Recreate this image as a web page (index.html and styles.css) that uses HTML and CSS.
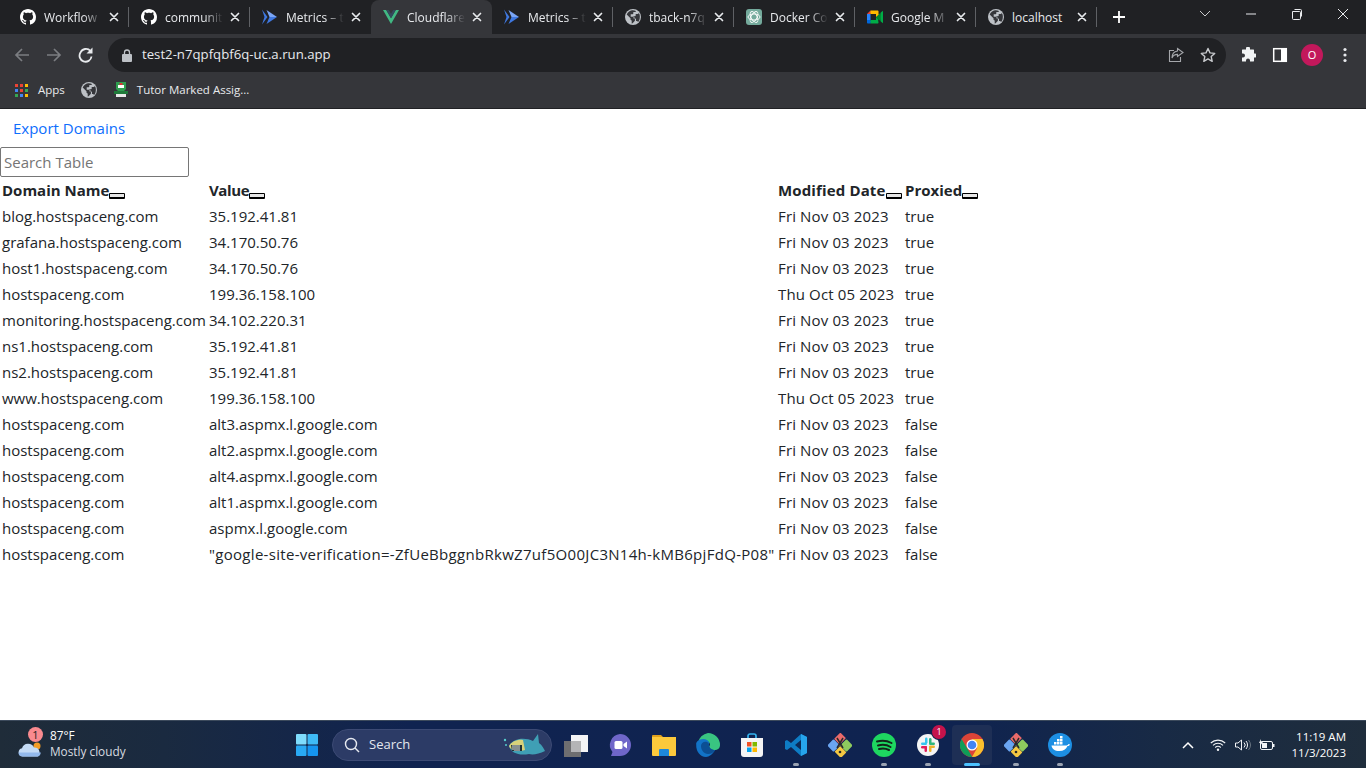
FILE: index.html
```html
<!DOCTYPE html>
<html lang="en">
<head>
<meta charset="utf-8">
<title>Cloudflare Domains</title>
<link rel="stylesheet" href="styles.css">
</head>
<body>
<svg class="defs" width="0" height="0" aria-hidden="true">
  <symbol id="gh" viewBox="0 0 16 16"><path fill="#fff" d="M8 0C3.58 0 0 3.58 0 8c0 3.54 2.29 6.53 5.47 7.59.4.07.55-.17.55-.38 0-.19-.01-.82-.01-1.49-2.01.37-2.53-.49-2.69-.94-.09-.23-.48-.94-.82-1.13-.28-.15-.68-.52-.01-.53.63-.01 1.08.58 1.23.82.72 1.21 1.87.87 2.33.66.07-.52.28-.87.51-1.07-1.78-.2-3.64-.89-3.64-3.95 0-.87.31-1.59.82-2.15-.08-.2-.36-1.02.08-2.12 0 0 .67-.21 2.2.82.64-.18 1.32-.27 2-.27.68 0 1.36.09 2 .27 1.53-1.04 2.2-.82 2.2-.82.44 1.1.16 1.92.08 2.12.51.56.82 1.27.82 2.15 0 3.07-1.87 3.75-3.65 3.95.29.25.54.73.54 1.48 0 1.07-.01 1.93-.01 2.2 0 .21.15.46.55.38A8.013 8.013 0 0016 8c0-4.42-3.58-8-8-8z"/></symbol>
  <symbol id="run" viewBox="0 0 16 16"><path fill="#3f78e0" d="M0 .5L5.500 8 0 15.500 2.500 8z"/><path fill="#7aa5f5" d="M4.500 1L15 8H7.500z"/><path fill="#3f78e0" d="M15 8L4.500 15l3-7z"/></symbol>
  <symbol id="globe" viewBox="0 0 16 16"><circle cx="8" cy="8" r="8" fill="#bdc1c6"/><path fill="#35363a" d="M7 1.200C4.600 1.600 2.600 3.200 1.700 5.500L5.500 9.200v1.100c0 .7.500 1.200 1.200 1.200v3l.9-.2 2.300-2.600V9.500c0-1.100-.9-1.800-1.900-1.800H5.700V5.300h1.500c.7 0 1.100-.5 1.100-1.100V3.100h1.500c.7 0 1.100-.5 1.100-1.100C9.800 1.300 8.300 1 7 1.200zM14.800 8.400c0 1.800-.7 3.400-1.800 4.600-.2-.5-.7-.9-1.300-.9H11v-2c0-.4-.3-.7-.7-.7H8.500V7.200H10c.4 0 .7-.3.7-.7V5.100H12c1 0 1.800-.8 1.800-1.200 1 1.300 1.200 2.900 1 4.500z"/></symbol>
  <symbol id="x" viewBox="0 0 10 10"><path stroke="#e8eaed" stroke-width="1.700" stroke-linecap="round" d="M1.500 1.500l7 7m0-7l-7 7" fill="none"/></symbol>
  <symbol id="kraken" viewBox="0 0 24 24"><rect x="1" y="8" width="9" height="9" rx="1" transform="rotate(45 5.500 12.500)" fill="#6aa5f2"/><rect x="14" y="8" width="9" height="9" rx="1" transform="rotate(45 18.500 12.500)" fill="#8ecb5e"/><rect x="8" y="15" width="9" height="8" rx="1" transform="rotate(45 12.500 19)" fill="#f5c842"/><rect x="8" y="1" width="8" height="9" rx="1" transform="rotate(45 12 5.500)" fill="#e96a6a"/><path d="M9 5l6 10m0-10L9 15" stroke="#2a2a2a" stroke-width="1.500"/><circle cx="12" cy="19" r="1.300" fill="#2a2a2a"/></symbol>
</svg>

<header class="chrome">
  <div class="tabstrip">
    <div class="tab tab-sep"><svg class="fav"><use href="#gh"/></svg><span class="tab-title">Workflow</span><svg class="tab-x"><use href="#x"/></svg></div>
    <div class="tab tab-sep"><svg class="fav"><use href="#gh"/></svg><span class="tab-title">communit</span><svg class="tab-x"><use href="#x"/></svg></div>
    <div class="tab"><svg class="fav"><use href="#run"/></svg><span class="tab-title">Metrics – t</span><svg class="tab-x"><use href="#x"/></svg></div>
    <div class="tab tab-active"><svg class="fav" viewBox="0 0 16 16"><path fill="#41b883" d="M0 1h3.200L8 9.300 12.800 1H16L8 15z"/><path fill="#35495e" d="M3.200 1h2.600L8 4.800 10.200 1h2.600L8 9.300z"/></svg><span class="tab-title">Cloudflare</span><svg class="tab-x"><use href="#x"/></svg></div>
    <div class="tab tab-sep"><svg class="fav"><use href="#run"/></svg><span class="tab-title">Metrics – t</span><svg class="tab-x"><use href="#x"/></svg></div>
    <div class="tab tab-sep"><svg class="fav"><use href="#globe"/></svg><span class="tab-title">tback-n7q</span><svg class="tab-x"><use href="#x"/></svg></div>
    <div class="tab tab-sep"><svg class="fav" viewBox="0 0 16 16"><rect width="16" height="16" rx="3" fill="#74aa9c"/><g fill="none" stroke="#fff" stroke-width=".9"><ellipse cx="8" cy="8" rx="6" ry="3"/><ellipse cx="8" cy="8" rx="6" ry="3" transform="rotate(60 8 8)"/><ellipse cx="8" cy="8" rx="6" ry="3" transform="rotate(120 8 8)"/></g></svg><span class="tab-title">Docker Co</span><svg class="tab-x"><use href="#x"/></svg></div>
    <div class="tab tab-sep"><svg class="fav" viewBox="0 0 16 16"><path fill="#00832d" d="M9 8l2 2.300 2.700 1.700.5-4-.5-4-2.800 1.500z"/><path fill="#0066da" d="M0 11v2.500c0 .6.500 1 1 1h2.500l.5-1.900-.5-1.600-1.800-.5z"/><path fill="#e94235" d="M3.500 1.500L0 5l1.800.5L3.500 5l.5-1.700z"/><path fill="#2684fc" d="M3.500 5H0v6h3.500z"/><path fill="#00ac47" d="M11 10.300L9 8v3H3.500v3.500h7c.6 0 1-.4 1-1z"/><path fill="#ffba00" d="M10.500 1.500h-7V5H9v3l2.500-2.300V2.500c0-.6-.4-1-1-1z"/><path fill="#00ac47" d="M13.700 3.500l2.300-1.700v12.400l-2.300-1.700z"/></svg><span class="tab-title">Google M</span><svg class="tab-x"><use href="#x"/></svg></div>
    <div class="tab tab-sep"><svg class="fav"><use href="#globe"/></svg><span class="tab-title tab-plain">localhost</span><svg class="tab-x"><use href="#x"/></svg></div>
    <svg class="newtab" viewBox="0 0 12 12"><path d="M6 0v12M0 6h12" stroke="#fff" stroke-width="1.800"/></svg>
    <div class="winctl">
      <svg class="wc" viewBox="0 0 46 28"><path d="M18 11l5 5 5-5" fill="none" stroke="#c9cacc"/></svg>
      <svg class="wc" viewBox="0 0 46 28"><path d="M18 14h10" stroke="#e8eaed" stroke-width="1"/></svg>
      <svg class="wc" viewBox="0 0 46 28"><path d="M18.500 11.500h7a1 1 0 011 1v6a1 1 0 01-1 1h-6a1 1 0 01-1-1zM20.500 9.500h6a1 1 0 011 1v6" fill="none" stroke="#e8eaed"/></svg>
      <svg class="wc" viewBox="0 0 46 28"><path d="M18 9l10 10m0-10L18 19" stroke="#e8eaed" stroke-width="1"/></svg>
    </div>
  </div>
  <div class="toolbar">
    <svg class="tb-ico" viewBox="0 0 16 16"><path d="M15 8H2M8 2L2 8l6 6" fill="none" stroke="#7b7d81" stroke-width="1.700"/></svg>
    <svg class="tb-ico" viewBox="0 0 16 16"><path d="M1 8h13M8 2l6 6-6 6" fill="none" stroke="#7b7d81" stroke-width="1.700"/></svg>
    <svg class="tb-ico" viewBox="0 0 16 16"><path d="M13.500 9.500A6 6 0 112.500 5.500 6 6 0 0112.500 4" fill="none" stroke="#e8eaed" stroke-width="1.800"/><path d="M14.500.5v6h-6z" fill="#e8eaed"/></svg>
    <div class="omnibox">
      <svg class="lock" viewBox="0 0 10 13"><path d="M2.500 5V3.500a2.500 2.500 0 015 0V5" fill="none" stroke="#bdc1c6" stroke-width="1.300"/><rect y="5" width="10" height="8" rx="1" fill="#bdc1c6"/></svg>
      <span class="url">test2-n7qpfqbf6q-uc.a.run.app</span>
      <svg class="omni-ico share" viewBox="0 0 16 16"><path d="M6 3.500H1.500v11h11V10" fill="none" stroke="#a5a7ab" stroke-width="1.100"/><path d="M9.500 1.500l5.500 4-5.500 4V7.400C7 7.400 5 8.500 4 11c0-4 2-6.500 5.500-7z" fill="none" stroke="#a5a7ab" stroke-width="1.100"/></svg>
      <svg class="omni-ico" viewBox="0 0 16 16"><path d="M8 1.500l2 4.400 4.700.5-3.500 3.200 1 4.700L8 11.900l-4.200 2.400 1-4.700L1.300 6.400 6 5.900z" fill="none" stroke="#c8cacd" stroke-width="1.400" stroke-linejoin="round"/></svg>
    </div>
    <svg class="tb-ico" viewBox="0 0 16 16"><path fill="#f1f3f4" d="M6 2a2 2 0 014 0v1h3.500c.4 0 .5.200.5.500V7h1a2 2 0 010 4h-1v3.500c0 .3-.2.500-.5.500H10v-1a2 2 0 00-4 0v1H2.500a.5.500 0 01-.5-.5V11h1a2 2 0 000-4H2V3.500c0-.3.200-.5.500-.5H6z" transform="translate(0 -.5)"/></svg>
    <svg class="tb-ico tb-panel" viewBox="0 0 16 16"><rect x="1.700" y="1.700" width="12.600" height="12.600" fill="none" stroke="#fff" stroke-width="1.500"/><rect x="9" y="2" width="5" height="12" fill="#fff"/></svg>
    <span class="avatar">O</span>
    <svg class="tb-ico tb-last" viewBox="0 0 16 16"><g fill="#e8eaed"><circle cx="8" cy="2.500" r="1.600"/><circle cx="8" cy="8" r="1.600"/><circle cx="8" cy="13.500" r="1.600"/></g></svg>
  </div>
  <div class="bookmarks">
    <svg class="apps" viewBox="0 0 13 13"><g><rect width="3" height="3" fill="#ea4335"/><rect x="5" width="3" height="3" fill="#ea4335"/><rect x="10" width="3" height="3" fill="#fbbc04"/><rect y="5" width="3" height="3" fill="#4285f4"/><rect x="5" y="5" width="3" height="3" fill="#ea4335"/><rect x="10" y="5" width="3" height="3" fill="#34a853"/><rect y="10" width="3" height="3" fill="#34a853"/><rect x="5" y="10" width="3" height="3" fill="#4285f4"/><rect x="10" y="10" width="3" height="3" fill="#fbbc04"/></g></svg>
    <span class="bm-text">Apps</span>
    <svg class="bm-globe"><use href="#globe"/></svg>
    <svg class="bm-tutor" viewBox="0 0 16 16"><path fill="#2e9e4f" d="M3 0h10v7l-2 2H5L3 7z"/><path fill="#fff" d="M5 3h6v3H5z"/><path fill="#d33" d="M6.500 1h3v2h-3z"/><path fill="#1f7a3a" d="M1 9h14v3H1z"/><path fill="#e8e8e8" d="M3 12h10v3H3z"/></svg>
    <span class="bm-text">Tutor Marked Assig...</span>
  </div>
</header>

<main class="page">
  <a class="export" href="#">Export Domains</a>
  <input class="search" type="text" placeholder="Search Table">
  <table class="domains">
    <colgroup><col class="c1"><col class="c2"><col class="c3"><col class="c4"></colgroup>
    <thead>
      <tr><th>Domain Name<button class="sort"></button></th><th><span class="h-value">Value</span><button class="sort"></button></th><th><span class="date">Modified Date</span><button class="sort"></button></th><th>Proxied<button class="sort"></button></th></tr>
    </thead>
    <tbody>
      <tr><td>blog.hostspaceng.com</td><td>35.192.41.81</td><td class="date">Fri Nov 03 2023</td><td>true</td></tr>
      <tr><td>grafana.hostspaceng.com</td><td>34.170.50.76</td><td class="date">Fri Nov 03 2023</td><td>true</td></tr>
      <tr><td>host1.hostspaceng.com</td><td>34.170.50.76</td><td class="date">Fri Nov 03 2023</td><td>true</td></tr>
      <tr><td>hostspaceng.com</td><td>199.36.158.100</td><td class="date">Thu Oct 05 2023</td><td>true</td></tr>
      <tr><td>monitoring.hostspaceng.com</td><td>34.102.220.31</td><td class="date">Fri Nov 03 2023</td><td>true</td></tr>
      <tr><td>ns1.hostspaceng.com</td><td>35.192.41.81</td><td class="date">Fri Nov 03 2023</td><td>true</td></tr>
      <tr><td>ns2.hostspaceng.com</td><td>35.192.41.81</td><td class="date">Fri Nov 03 2023</td><td>true</td></tr>
      <tr><td>www.hostspaceng.com</td><td>199.36.158.100</td><td class="date">Thu Oct 05 2023</td><td>true</td></tr>
      <tr><td>hostspaceng.com</td><td>alt3.aspmx.l.google.com</td><td class="date">Fri Nov 03 2023</td><td>false</td></tr>
      <tr><td>hostspaceng.com</td><td>alt2.aspmx.l.google.com</td><td class="date">Fri Nov 03 2023</td><td>false</td></tr>
      <tr><td>hostspaceng.com</td><td>alt4.aspmx.l.google.com</td><td class="date">Fri Nov 03 2023</td><td>false</td></tr>
      <tr><td>hostspaceng.com</td><td>alt1.aspmx.l.google.com</td><td class="date">Fri Nov 03 2023</td><td>false</td></tr>
      <tr><td>hostspaceng.com</td><td>aspmx.l.google.com</td><td class="date">Fri Nov 03 2023</td><td>false</td></tr>
      <tr><td>hostspaceng.com</td><td class="val-long">"google-site-verification=-ZfUeBbggnbRkwZ7uf5O00JC3N14h-kMB6pjFdQ-P08"</td><td class="date">Fri Nov 03 2023</td><td>false</td></tr>
    </tbody>
  </table>
</main>

<footer class="taskbar">
  <div class="widget">
    <span class="weather-ico">
      <svg viewBox="0 0 24 15" width="24" height="15"><circle cx="19" cy="4" r="3.500" fill="#f39c25"/><path d="M4.500 14.500a4.200 4.200 0 01-.5-8.300 6.500 6.500 0 0112-.7 4.800 4.800 0 015.500 4.500 4.500 4.500 0 01-1.500 4.500z" fill="#c4dbf6"/><path d="M.5 10.500h22.300c-.3 2.500-1.500 4-3.800 4H4.500c-2.500 0-4-1.500-4-4z" fill="#93b9ec"/></svg>
      <span class="w-badge">1</span>
    </span>
    <span class="w-text"><span class="w-temp">87°F</span><span class="w-desc">Mostly cloudy</span></span>
  </div>
  <div class="task-center">
    <span class="tile">
      <svg viewBox="0 0 22 22" width="22" height="22"><rect width="10.500" height="10.500" rx="1" fill="#7fdcfc"/><rect x="11.500" width="10.500" height="10.500" rx="1" fill="#3fbaf5"/><rect y="11.500" width="10.500" height="10.500" rx="1" fill="#29a9f3"/><rect x="11.500" y="11.500" width="10.500" height="10.500" rx="1" fill="#1594ef"/></svg>
    </span>
    <div class="searchbox">
      <svg viewBox="0 0 16 16" width="16" height="16"><circle cx="7" cy="7" r="5.500" fill="none" stroke="#e6e9f0" stroke-width="1.400"/><path d="M11 11l4 4" stroke="#e6e9f0" stroke-width="1.500"/></svg>
      <span class="search-label">Search</span>
      <svg class="fish" viewBox="0 0 44 28" width="44" height="28"><path d="M6 15C10 7 22 6 30 10l5-7 1 9c3 2 5 6 6 8-6 3-12 4-16 3C16 25 8 22 6 15z" fill="#3f9fb5"/><path d="M6 15c3-5 9-7 14-6l2 10c-6 2-14 1-16-4z" fill="#d9d27a"/><path d="M8 14h11v6H9z" fill="#233"/><path d="M10 14v5m2-5v6m2-6v6m2-6v6" stroke="#eee" stroke-width="1"/><circle cx="2" cy="9" r="1.200" fill="#5cc"/><circle cx="3" cy="14" r="1" fill="#5cc"/></svg>
    </div>
    <span class="tile">
      <svg viewBox="0 0 24 24" width="24" height="24"><rect x="7" y="2" width="17" height="17" fill="#f4f4f6"/><rect x="0" y="8" width="17" height="16" fill="#6e6e70"/><rect x="7" y="8" width="10" height="11" fill="#b4b4b6"/></svg>
    </span>
    <span class="tile">
      <svg viewBox="0 0 24 24" width="24" height="24"><path d="M12 1a11 11 0 110 22H3l1.500-4A11 11 0 0112 1z" fill="#6f66c9"/><rect x="6.500" y="8" width="8" height="8" rx="1.500" fill="#fff"/><path d="M15.500 11l3.500-2.500v7L15.500 13z" fill="#fff"/></svg>
    </span>
    <span class="tile">
      <svg viewBox="0 0 24 22" width="24" height="22"><path d="M0 2a1 1 0 011-1h8l2 2h-11z" fill="#e0a01c"/><path d="M0 3h24v18a1 1 0 01-1 1H1a1 1 0 01-1-1z" fill="#fcc93c"/><path d="M7 16a1 1 0 011-1h8a1 1 0 011 1v6H7z" fill="#1e88d8"/></svg>
    </span>
    <span class="tile">
      <svg viewBox="0 0 24 24" width="24" height="24"><path d="M12 0a12 12 0 0112 12c0 3-2 5-6 5-3 0-5-1-5-3 0-1 1-1 1-3-1-4-8-5-12-1A12 12 0 0112 0z" fill="#39c481"/><path d="M.2 10C2 6 8 5 11 7c3 2 2 4 2 5 0 3 3 5 6 5-2 4-6 7-9 7C4 24 0 18 .2 12z" fill="#1273c7"/><path d="M5 13c0-3 3-5 6-4 2 1 2 2 2 3 0 3 3 5 6 5-2 3-4 4-7 4-4 0-7-4-7-8z" fill="#0c4f94"/></svg>
    </span>
    <span class="tile">
      <svg viewBox="0 0 22 24" width="22" height="24"><path d="M7 5V3a2 2 0 012-2h4a2 2 0 012 2v2" fill="none" stroke="#35b3ee" stroke-width="1.700"/><path d="M0 5h22v16a3 3 0 01-3 3H3a3 3 0 01-3-3z" fill="#f4f4f4"/><rect x="6" y="9" width="4.500" height="4.500" fill="#f25022"/><rect x="11.500" y="9" width="4.500" height="4.500" fill="#7fba00"/><rect x="6" y="14.500" width="4.500" height="4.500" fill="#00a4ef"/><rect x="11.500" y="14.500" width="4.500" height="4.500" fill="#ffb900"/></svg>
    </span>
    <span class="tile on">
      <svg viewBox="0 0 24 24" width="24" height="24"><path d="M17 1l6 3v16l-6 3L7 14l-4 3-2-1V8l2-1 4 3z" fill="#0e7cc4"/><path d="M17 1l6 3v16l-6 3z" fill="#26a4ec"/><path d="M17 7l-6 5 6 5z" fill="#0b2a57"/></svg>
    </span>
    <span class="tile"><svg width="24" height="24"><use href="#kraken"/></svg></span>
    <span class="tile on">
      <svg viewBox="0 0 24 24" width="24" height="24"><circle cx="12" cy="12" r="12" fill="#1ed760"/><path d="M5 8.500c5-1.500 10-1 14.500 1.500M6 12.500c4-1 9-.7 12.500 1.500M7 16c3-.8 7-.6 10 1" fill="none" stroke="#12261a" stroke-width="2" stroke-linecap="round"/></svg>
    </span>
    <span class="tile on">
      <svg viewBox="0 0 24 24" width="24" height="24"><circle cx="12" cy="12" r="11" fill="#f4f4f4"/><rect x="5" y="9.500" width="6" height="2.500" rx="1.200" fill="#36c5f0"/><rect x="9" y="4.500" width="2.500" height="6" rx="1.200" fill="#36c5f0"/><rect x="13" y="12.500" width="6" height="2.500" rx="1.200" fill="#ecb22e"/><rect x="13" y="13" width="2.500" height="6" rx="1.200" fill="#ecb22e"/><rect x="5" y="13" width="6" height="2.500" rx="1.200" fill="#e01e5a"/><rect x="8.500" y="13" width="2.500" height="6" rx="1.200" fill="#e01e5a"/><rect x="13" y="9.500" width="6" height="2.500" rx="1.200" fill="#2eb67d"/><rect x="13" y="5" width="2.500" height="6" rx="1.200" fill="#2eb67d"/></svg>
      <span class="t-badge">1</span>
    </span>
    <span class="tile active">
      <svg viewBox="0 0 24 24" width="24" height="24"><circle cx="12" cy="12" r="12" fill="#db4437"/><path d="M12 24a12 12 0 0010.400-18H12l5.200 9z" fill="#fbc02d"/><path d="M1.600 6L7 15l5.200 9A12 12 0 011.600 6z" fill="#0f9d58"/><circle cx="12" cy="12" r="5.500" fill="#fff"/><circle cx="12" cy="12" r="4.300" fill="#4285f4"/></svg>
    </span>
    <span class="tile on"><svg width="24" height="24"><use href="#kraken"/></svg></span>
    <span class="tile on">
      <svg viewBox="0 0 24 24" width="24" height="24"><circle cx="12" cy="12" r="12" fill="#1d8fe3"/><path d="M3.500 12.500h15c1 0 1.500-1 2-1.500 1 .2 1.500.5 1.500.5-.7 1.200-1.500 1.500-2.500 1.500-1.500 3.500-4 5-8 5-5 0-7.500-2-8-5.500z" fill="#fff"/><path d="M6 9h2.500v2.500H6zm3 0h2.500v2.500H9zm3 0h2.500v2.500H12zm-3-3h2.500v2.500H9zm3 0h2.500v2.500H12zm0-3h2.500v2.500H12z" fill="#fff"/></svg>
    </span>
  </div>
  <div class="tray">
    <svg viewBox="0 0 12 8" width="12" height="8"><path d="M1 7l5-5 5 5" fill="none" stroke="#fff" stroke-width="1.500"/></svg>
    <svg class="tray-wifi" viewBox="0 0 16 12" width="16" height="12"><path d="M.8 4a10.500 10.500 0 0114.400 0M3 6.300a7.300 7.300 0 0110 0M5.200 8.500a4.200 4.200 0 015.600 0" fill="none" stroke="#f2f4f6" stroke-width="1.100"/><circle cx="8" cy="10.700" r="1.200" fill="#f2f4f6"/></svg>
    <svg class="tray-vol" viewBox="0 0 16 12" width="16" height="12"><path d="M.5 4h2.500l3.500-3v10L3 8H.5z" fill="none" stroke="#f2f4f6"/><path d="M9 3.500a3.500 3.500 0 010 5M11 2a6 6 0 010 8" fill="none" stroke="#f2f4f6"/><path d="M13.500 1a8 8 0 010 10" fill="none" stroke="#6b7783"/></svg>
    <svg class="tray-bat" viewBox="0 0 17 12" width="17" height="12"><rect x="2.500" y="2.500" width="12" height="8" rx="1.500" fill="none" stroke="#f2f4f6"/><rect x="4" y="4" width="5" height="5" fill="#f2f4f6"/><rect x="15" y="5" width="1.500" height="3" fill="#f2f4f6"/><path d="M3 0L1 4h2L2 7l3-4H3z" fill="#f2f4f6"/></svg>
    <span class="clock"><span>11:19 AM</span><span>11/3/2023</span></span>
  </div>
</footer>
</body>
</html>
```
FILE: styles.css
```css
* { box-sizing: border-box; }
html, body { margin: 0; height: 100%; }
body {
  width: 1366px;
  height: 768px;
  overflow: hidden;
  display: flex;
  flex-direction: column;
  background: #fff;
  font-family: "Open Sans", "Liberation Sans", sans-serif;
}
.defs { display: block; width: 0; height: 0; }

/* Browser chrome */
.chrome { flex: none; height: 109px; background: #35363a; border-bottom: 1px solid #202124; }
.tabstrip { height: 34px; background: #202124; display: flex; align-items: stretch; padding-left: 8px; }
.tab {
  width: 121px;
  display: flex;
  align-items: center;
  padding: 0 10px 0 12px;
  color: #e8eaed;
  font-size: 12px;
  position: relative;
}
.tab > * { flex: none; }
.tab-sep::after {
  content: "";
  position: absolute;
  right: 0;
  top: 7px;
  width: 1px;
  height: 20px;
  background: #5f6165;
}
.tab-active { background: #35363a; border-radius: 8px 8px 0 0; }
.fav { width: 16px; height: 16px; }
.tab-title {
  flex: 1 1 0;
  min-width: 0;
  margin-left: 8px;
  white-space: nowrap;
  -webkit-mask-image: linear-gradient(90deg, #000 68%, transparent 100%);
  mask-image: linear-gradient(90deg, #000 68%, transparent 100%);
}
.tab-plain { -webkit-mask-image: none; mask-image: none; }
.tab-x { width: 10px; height: 10px; margin-left: 7px; }
.newtab { width: 12px; height: 12px; align-self: center; margin-left: 16px; flex: none; }
.winctl { display: flex; margin-left: auto; }
.wc { width: 46px; height: 28px; }

.toolbar { height: 38px; padding: 4px 13px 0 14px; display: flex; align-items: center; }
.tb-ico { width: 16px; height: 16px; flex: none; margin-right: 16px; }
.tb-panel { margin-right: 13px; }
.tb-last { margin-right: 0; }
.omnibox {
  flex: 1;
  height: 34px;
  margin: 0 14px 0 -2px;
  border-radius: 17px;
  background: #202124;
  display: flex;
  align-items: center;
  padding: 0 10px 0 14px;
}
.lock { width: 10px; height: 13px; flex: none; }
.url { margin-left: 10px; color: #e8eaed; font: 13.200px/1 "Open Sans", sans-serif; flex: 1; }
.omni-ico { width: 16px; height: 16px; flex: none; margin-left: 16px; }
.avatar {
  width: 22px; height: 22px; border-radius: 50%;
  background: #c2185b; color: #fff;
  font-size: 11px; line-height: 22px; text-align: center;
  flex: none; margin-right: 14px;
}
.bookmarks { height: 36px; display: flex; align-items: center; padding-left: 15px; color: #e8eaed; font-size: 11.500px; }
.apps { width: 13px; height: 13px; flex: none; margin-right: 10px; }
.bm-text { white-space: nowrap; margin-top: -2px; }
.bm-globe { width: 16px; height: 16px; margin-left: 16px; flex: none; }
.bm-tutor { width: 16px; height: 16px; margin: 0 8px 0 16px; flex: none; }

/* Page */
.page { flex: 1; min-height: 0; font-size: 15px; line-height: 24px; color: #212529; }
.export { display: block; padding: 7px 13px; height: 38px; color: #0d6efd; text-decoration: none; }
.search {
  display: block;
  width: 189px;
  height: 30px;
  padding: 1px 3px;
  border: 1px solid #767676;
  border-radius: 2px;
  font: inherit;
  color: #212529;
  background: #fff;
}
.search::placeholder { color: #757575; opacity: 1; }
.domains { border-spacing: 2px; border-collapse: separate; table-layout: fixed; width: 980px; margin-top: -1px; }
.c1 { width: 205px; }
.c2 { width: 567px; }
.c3 { width: 125px; }
.c4 { width: 75px; }
.domains th, .domains td { padding: 0; height: 24px; text-align: left; white-space: nowrap; }
.domains th { font-weight: 700; }
.date { letter-spacing: .14px; }
.h-value { letter-spacing: -.4px; }
.val-long { letter-spacing: .3px; }
.sort {
  display: inline-block;
  width: 16px;
  height: 6px;
  padding: 0;
  vertical-align: -1px;
  background: #e6e6e6;
  border-style: solid;
  border-color: #000;
  border-width: 1px 1px 2px;
  border-radius: 1px;
}

/* Windows taskbar */
.taskbar {
  flex: none;
  height: 48px;
  display: flex;
  align-items: center;
  border-top: 1px solid #3c4a5c;
  background: linear-gradient(90deg, #1f2c39 0, #1a2a40 12%, #102350 30%, #0f2350 70%, #182a45 85%, #1f2d3c 100%);
  color: #fff;
}
.widget { width: 287px; flex: none; display: flex; align-items: center; padding-left: 18px; font-size: 11.800px; }
.weather-ico { position: relative; width: 24px; height: 15px; display: block; margin-top: 9px; }
.weather-ico svg { display: block; }
.w-badge {
  position: absolute; left: 10px; top: -15px;
  width: 15px; height: 15px; border-radius: 50%;
  background: #f98a8f; color: #222; font-size: 11px; line-height: 15px; text-align: center;
}
.w-text { display: flex; flex-direction: column; margin: -3px 0 0 8px; line-height: 16px; }
.w-desc { color: #d8dce0; }
.task-center { display: flex; align-items: center; height: 40px; }
.tile {
  position: relative;
  width: 40px; height: 40px; margin-right: 4px;
  display: flex; align-items: center; justify-content: center;
  border-radius: 4px;
  flex: none;
}
.tile.on::after, .tile.active::after {
  content: ""; position: absolute; left: 17px; bottom: -1px;
  width: 6px; height: 3px; border-radius: 2px; background: #9aa3b2;
}
.tile.active { background: #1e2f55; }
.tile.active::after { left: 12px; width: 16px; background: #4cc2ff; }
.t-badge {
  position: absolute; right: 2px; top: 0;
  width: 14px; height: 14px; border-radius: 50%;
  background: #c4134b; color: #fff; font-size: 9px; line-height: 14px; text-align: center;
  box-shadow: 0 0 0 1px #102350;
}
.searchbox {
  width: 220px; height: 32px; margin: 0 4px 0 1px;
  border-radius: 16px;
  background: #2c3b66;
  border: 1px solid #3c4a74;
  display: flex; align-items: center;
  padding: 0 4px 0 11px;
  flex: none;
}
.search-label { margin: -2px 0 0 9px; font-size: 13px; color: #e4e7ee; flex: 1; }
.fish { flex: none; }
.tray { flex: 1; display: flex; align-items: center; justify-content: flex-end; padding-right: 20px; }
.tray-wifi { margin-left: 16px; }
.tray-vol { margin-left: 9px; }
.tray-bat { margin-left: 7px; }
.clock { display: flex; flex-direction: column; align-items: flex-end; margin-left: 17px; font-size: 11.500px; line-height: 16px; }
```
